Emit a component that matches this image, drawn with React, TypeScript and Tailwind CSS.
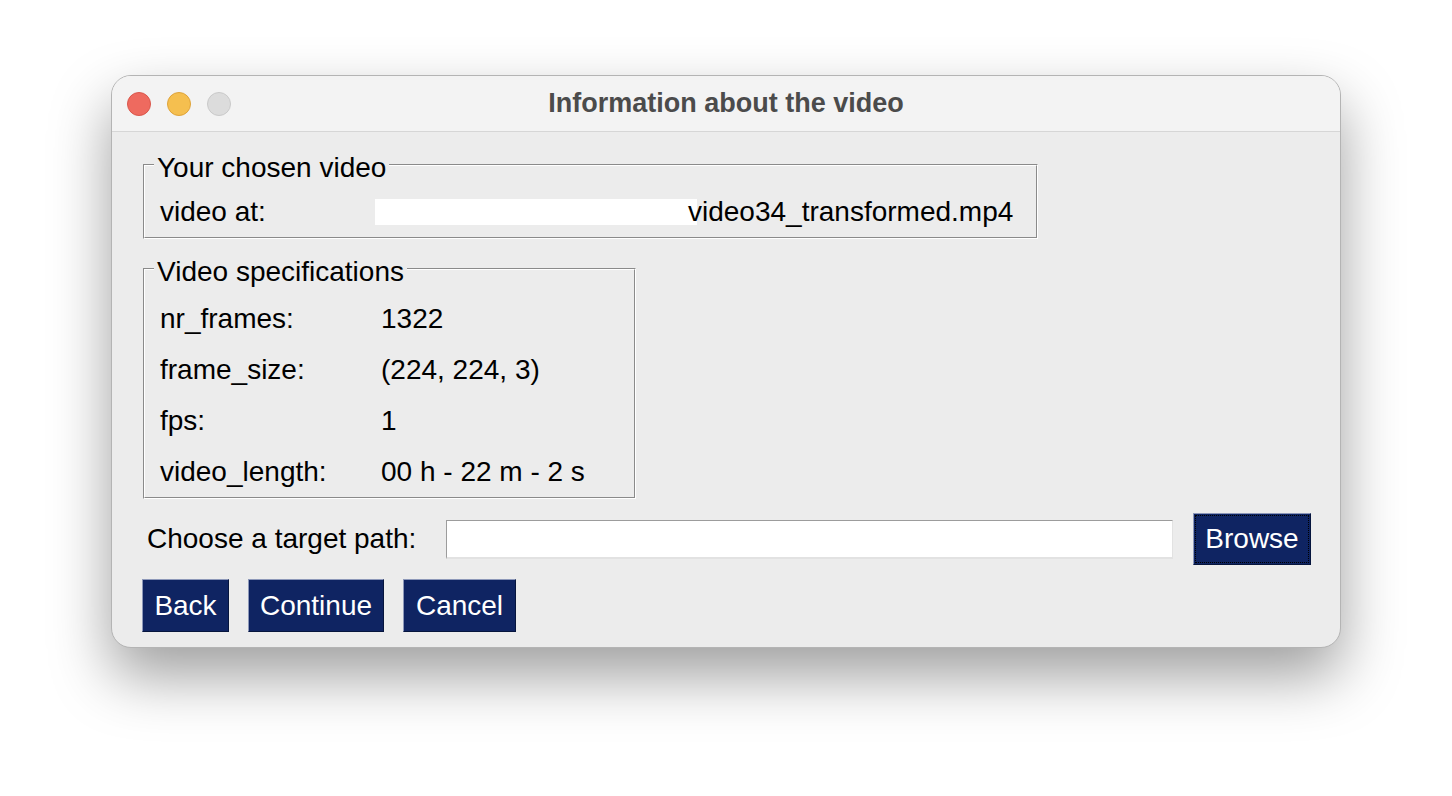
import type { ReactNode } from 'react';

const font = { fontFamily: '"Liberation Sans", Arial, sans-serif' };

function Frame({ title, width, children }: { title: string; width: string; children: ReactNode }) {
  return (
    <div className={`relative ${width} border border-[#8a8a8a] border-r-white border-b-white`}>
      <div className="border border-white border-r-[#8a8a8a] border-b-[#8a8a8a]">{children}</div>
      <span className="absolute -top-[13px] left-[10px] bg-[#ececec] px-[3px] leading-[32px]">{title}</span>
    </div>
  );
}

function Row({ label, value, pad }: { label: string; value: ReactNode; pad: string }) {
  return (
    <div className="flex h-[51px] items-center pl-[15px]">
      <div className={pad}>{label}</div>
      <div className="flex items-center">{value}</div>
    </div>
  );
}

function TkButton({ children, width }: { children: ReactNode; width: string }) {
  return (
    <button
      className={`h-[53px] ${width} border border-[#8d98b9] border-r-[#06153d] border-b-[#06153d] bg-[#0f2462] text-center leading-none text-white`}
    >
      {children}
    </button>
  );
}

export default function App() {
  const specs = [
    ['nr_frames:', '1322'],
    ['frame_size:', '(224, 224, 3)'],
    ['fps:', '1'],
    ['video_length:', '00 h - 22 m - 2 s'],
  ];

  return (
    <div className="flex min-h-screen justify-center bg-white pt-[75px]" style={font}>
      <div className="h-[573px] w-[1230px] overflow-hidden rounded-[20px] border border-[#b4b4b4] bg-[#ececec] shadow-[0_28px_60px_rgba(0,0,0,0.38)]">
        {/* title bar */}
        <div className="flex h-[56px] items-center border-b border-[#d6d6d6] bg-[#f3f3f3]">
          <div className="flex w-[130px] gap-[16px] pl-[15px]">
            <span className="h-[24px] w-[24px] rounded-full border border-[#d9574c] bg-[#ee6a5f]" />
            <span className="h-[24px] w-[24px] rounded-full border border-[#dea33a] bg-[#f5bf4f]" />
            <span className="h-[24px] w-[24px] rounded-full border border-[#c9c9c9] bg-[#dcdcdc]" />
          </div>
          <div className="flex-1 text-center text-[27px] font-bold text-[#4b4b4b]">Information about the video</div>
          <div className="w-[130px]" />
        </div>

        {/* body */}
        <div className="flex flex-col pl-[31px] pt-[32px] text-[28px] text-black">
          <Frame title="Your chosen video" width="w-[895px]">
            <div className="pt-[20px]">
              <Row
                label="video at:"
                pad="w-[215px]"
                value={
                  <>
                    <span className="h-[26px] w-[322px] bg-white" />
                    <span className="-ml-[9px]">video34_transformed.mp4</span>
                  </>
                }
              />
            </div>
          </Frame>

          <div className="mt-[29px]">
            <Frame title="Video specifications" width="w-[493px]">
              <div className="pt-[23px]">
                {specs.map(([k, v]) => (
                  <Row key={k} label={k} value={v} pad="w-[221px]" />
                ))}
              </div>
            </Frame>
          </div>

          <div className="mt-[14px] flex items-center">
            <div className="w-[303px] pl-[4px]">Choose a target path:</div>
            <div className="h-[39px] w-[727px] border border-[#9c9c9c] border-r-[#e2e2e2] border-b-2 border-b-[#e2e2e2] bg-white" />
            <div className="ml-[20px]">
              <button className="h-[52px] w-[118px] border border-[#8d98b9] border-r-[#06153d] border-b-[#06153d] bg-[#0f2462] leading-none text-white outline-1 outline-dotted outline-black outline-offset-[-3px]">
                Browse
              </button>
            </div>
          </div>

          <div className="-ml-[1px] mt-[14px] flex gap-[19px]">
            <TkButton width="w-[87px]">Back</TkButton>
            <TkButton width="w-[136px]">Continue</TkButton>
            <TkButton width="w-[113px]">Cancel</TkButton>
          </div>
        </div>
      </div>
    </div>
  );
}
